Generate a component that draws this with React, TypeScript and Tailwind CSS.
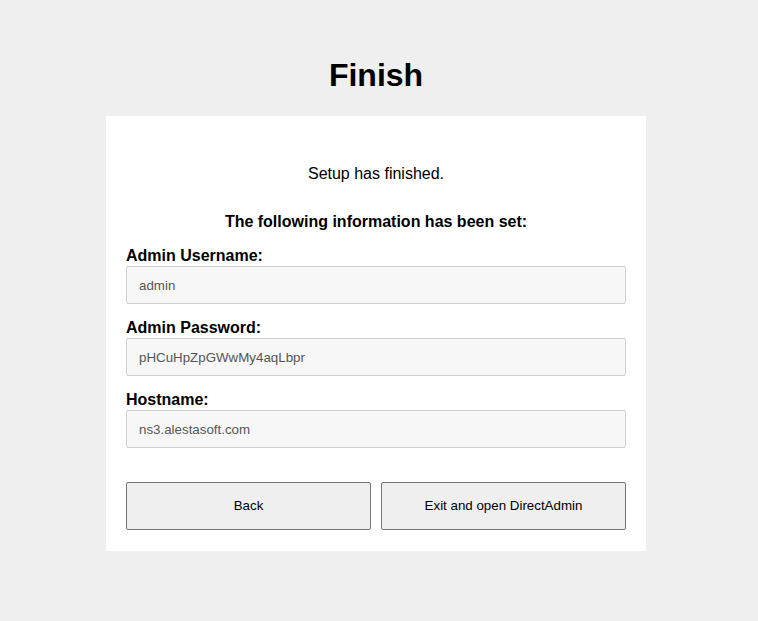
const fields = [
  { label: "Admin Username:", value: "admin" },
  { label: "Admin Password:", value: "pHCuHpZpGWwMy4aqLbpr" },
  { label: "Hostname:", value: "ns3.alestasoft.com" },
];

export default function App() {
  return (
    <div
      className="min-h-[621px] bg-[#efefef] text-black"
      style={{ fontFamily: '"Liberation Sans", Arial, sans-serif' }}
    >
      <div className="w-[752px] flex flex-col items-center pt-[57px] pb-[70px]">
        <h1 className="text-[32px] font-bold leading-[37px] mb-[22px]">Finish</h1>

        {/* Card */}
        <div className="w-[540px] bg-white px-5 pt-[49px] pb-[21px]">
          <p className="text-center text-base leading-[18px]">Setup has finished.</p>
          <p className="text-center text-base font-bold leading-[18px] mt-[30px]">
            The following information has been set:
          </p>

          <div className="mt-4">
            {fields.map((f, i) => (
              <div key={f.label} className={i > 0 ? "mt-[15px]" : ""}>
                <label className="block text-base font-bold leading-[18px] mb-px">
                  {f.label}
                </label>
                <input
                  readOnly
                  value={f.value}
                  className="w-full h-[38px] px-3 border border-[#d0d0d0] rounded-[2px] bg-[#f7f7f7] text-[13.333px] text-[#555] outline-none"
                  style={{ fontFamily: '"Liberation Sans", Arial, sans-serif' }}
                />
              </div>
            ))}
          </div>

          <div className="grid grid-cols-2 gap-[10px] mt-[34px]">
            <button className="h-12 border border-[#767676] rounded-[2px] bg-[#efefef] text-[13.333px] text-black">
              Back
            </button>
            <button className="h-12 border border-[#767676] rounded-[2px] bg-[#efefef] text-[13.333px] text-black">
              Exit and open DirectAdmin
            </button>
          </div>
        </div>
      </div>
    </div>
  );
}
